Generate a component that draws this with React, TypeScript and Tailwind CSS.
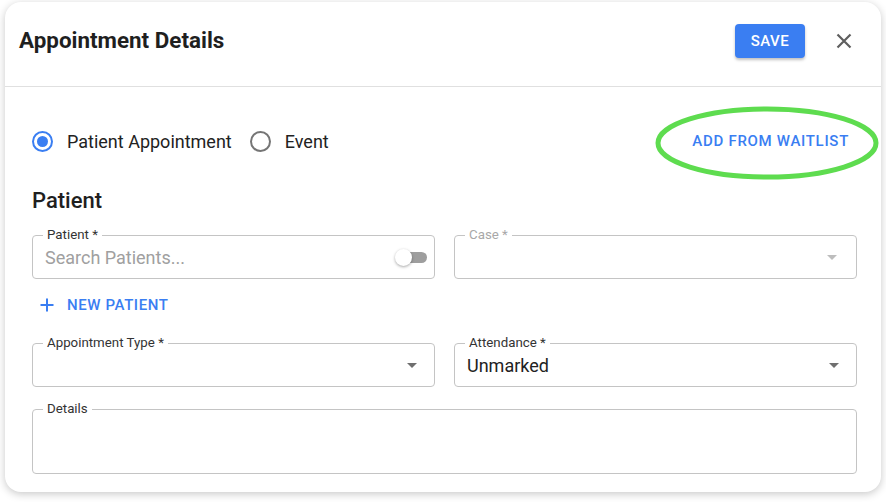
import React from 'react';

const font = { fontFamily: 'Roboto, "Liberation Sans", sans-serif' };

interface OutlinedFieldProps {
  label: string;
  disabled?: boolean;
  className?: string;
  children?: React.ReactNode;
}

const OutlinedField: React.FC<OutlinedFieldProps> = ({ label, disabled, className, children }) => (
  <div className={`relative rounded border border-[#c4c4c4] ${className ?? ''}`}>
    <span
      className={`absolute -top-[9px] left-[10px] bg-white px-[4px] text-[13.3px] leading-[16px] ${
        disabled ? 'text-[#a8a8a8]' : 'text-[#333]'
      }`}
    >
      {label}
    </span>
    {children}
  </div>
);

const Arrow: React.FC<{ light?: boolean }> = ({ light }) => (
  <svg width="10" height="5" viewBox="0 0 10 5" className={light ? 'text-[#bdbdbd]' : 'text-[#6f6f6f]'}>
    <path d="M0 0 L10 0 L5 5 Z" fill="currentColor" />
  </svg>
);

const Radio: React.FC<{ checked?: boolean; label: string }> = ({ checked, label }) => (
  <div className="flex items-center gap-[14px]">
    <span
      className={`flex h-[21px] w-[21px] items-center justify-center rounded-full border-2 ${
        checked ? 'border-[#3a7ef2]' : 'border-[#757575]'
      }`}
    >
      {checked && <span className="h-[11px] w-[11px] rounded-full bg-[#3a7ef2]" />}
    </span>
    <span className="text-[18px] text-[#222]">{label}</span>
  </div>
);

export default function App() {
  return (
    <div className="min-h-screen bg-white pl-[5px] pt-[2px]" style={font}>
      <div className="relative w-[876px] h-[490px] rounded-[16px] bg-white shadow-[0_2px_8px_rgba(0,0,0,0.22)]">
        {/* header */}
        <div className="flex h-[85px] items-center justify-between border-b border-[#e0e0e0] pb-[6px] pl-[14px] pr-[29px]">
          <h1 className="text-[22.4px] font-bold text-[#1f1f1f]">Appointment Details</h1>
          <div className="flex items-center gap-[31px]">
            <button className="h-[34px] w-[70px] rounded-[4px] bg-[#3a7ef2] text-[15px] font-medium tracking-[0.5px] text-white shadow-[0_2px_3px_rgba(0,0,0,0.25)]">
              SAVE
            </button>
            <svg width="16" height="16" viewBox="0 0 16 16" className="text-[#5f5f5f]">
              <path d="M1.5 1.5 L14.5 14.5 M14.5 1.5 L1.5 14.5" stroke="currentColor" strokeWidth="2.2" />
            </svg>
          </div>
        </div>

        {/* body */}
        <div className="pl-[27px] pr-[24px] pt-[34px] pb-[19px]">
          <div className="flex h-[40px] items-center justify-between">
            <div className="flex items-center gap-[18px]">
              <Radio checked label="Patient Appointment" />
              <Radio label="Event" />
            </div>
            <button className="pr-[8px] text-[15px] font-medium tracking-[0.7px] text-[#3a7ef2]">
              ADD FROM WAITLIST
            </button>
          </div>

          <h2 className="mt-[26px] text-[22px] font-medium leading-[28px] text-[#1f1f1f]">Patient</h2>

          <div className="mt-[20px] grid grid-cols-2 gap-[19px]">
            <OutlinedField label="Patient *" className="h-[44px]">
              <div className="flex h-full items-center justify-between pl-[12px] pr-[7px]">
                <span className="text-[18px] text-[#a0a0a0]">Search Patients...</span>
                <span className="relative flex h-[11px] w-[31px] items-center rounded-full bg-[#9e9e9e]">
                  <span className="absolute -left-[1px] h-[17px] w-[17px] rounded-full bg-white shadow-[0_1px_3px_rgba(0,0,0,0.35)]" />
                </span>
              </div>
            </OutlinedField>
            <OutlinedField label="Case *" disabled className="h-[44px]">
              <div className="flex h-full items-center justify-end pr-[19px]">
                <Arrow light />
              </div>
            </OutlinedField>
          </div>

          <div className="mt-[8px] flex h-[36px] items-center gap-[13px] pl-[8px] text-[#3a7ef2]">
            <svg width="14" height="14" viewBox="0 0 14 14">
              <path d="M7 0.5 V13.5 M0.5 7 H13.5" stroke="currentColor" strokeWidth="2" />
            </svg>
            <span className="text-[15px] font-medium tracking-[0.6px]">NEW PATIENT</span>
          </div>

          <div className="mt-[20px] grid grid-cols-2 gap-[19px]">
            <OutlinedField label="Appointment Type *" className="h-[44px]">
              <div className="flex h-full items-center justify-end pr-[17px]">
                <Arrow />
              </div>
            </OutlinedField>
            <OutlinedField label="Attendance *" className="h-[44px]">
              <div className="flex h-full items-center justify-between pl-[12px] pr-[17px]">
                <span className="text-[18px] text-[#222]">Unmarked</span>
                <Arrow />
              </div>
            </OutlinedField>
          </div>

          <OutlinedField label="Details" className="mt-[22px] h-[65px]" />
        </div>

        {/* highlight annotation */}
        <svg
          width="224"
          height="74"
          viewBox="0 0 224 74"
          className="pointer-events-none absolute left-[650px] top-[104px]"
        >
          <ellipse cx="112" cy="37" rx="109" ry="34" fill="none" stroke="#5edc4f" strokeWidth="5" />
        </svg>
      </div>
    </div>
  );
}
